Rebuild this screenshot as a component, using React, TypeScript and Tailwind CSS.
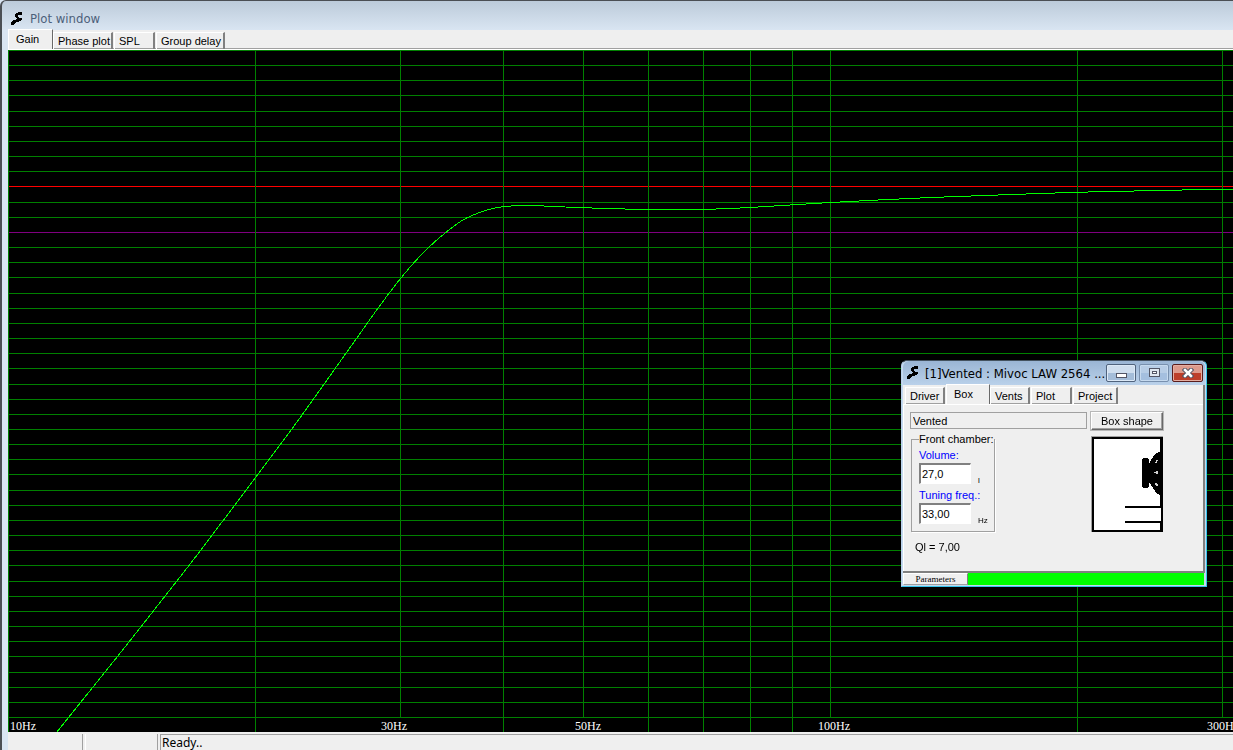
import { useState } from 'react';

interface Point {
  x: number;
  y: number;
}

const DECADE_WIDTH = 822;
const PLOT_HEIGHT = 682;
const LABEL_TOP = 667;
const ROW_COUNT = 44;

const FREQUENCIES = [10, 20, 30, 40, 50, 60, 70, 80, 90, 100, 200, 300, 400];
const LABELLED = [10, 30, 50, 100, 300];

// Left edge of each axis label, relative to its grid line
const LABEL_OFFSETS: Record<number, number> = { 10: 2, 30: -19, 50: -8, 100: -12, 300: -15 };

const PLOT_TABS = ['Gain', 'Phase plot', 'SPL', 'Group delay'];
const PROJECT_TABS = ['Driver', 'Box', 'Vents', 'Plot', 'Project'];

const TAB_WIDTHS: Record<string, string> = {
  Gain: 'w-[45px]',
  'Phase plot': 'w-[60px]',
  SPL: 'w-[41px]',
  'Group delay': 'w-[69px]',
  Driver: 'w-[40px]',
  Box: 'w-[44px]',
  Vents: 'w-[40px]',
  Plot: 'w-[41px]',
  Project: 'w-[45px]',
};

// Sampled transfer function, in plot pixels
const GAIN: Point[] = [
  { x: 48, y: 682 }, { x: 72, y: 652 }, { x: 109, y: 606 }, { x: 157, y: 545 },
  { x: 192, y: 500 }, { x: 247, y: 427 }, { x: 283, y: 379 }, { x: 316, y: 333 },
  { x: 348, y: 288 }, { x: 370, y: 257 }, { x: 392, y: 228 }, { x: 412, y: 205 },
  { x: 430, y: 188 }, { x: 452, y: 171 }, { x: 466, y: 164 }, { x: 480, y: 159 },
  { x: 496, y: 156 }, { x: 522, y: 155 }, { x: 545, y: 156 }, { x: 569, y: 157 },
  { x: 598, y: 158 }, { x: 640, y: 159 }, { x: 690, y: 159 }, { x: 742, y: 157 },
  { x: 822, y: 152 }, { x: 922, y: 147 }, { x: 1003, y: 144 }, { x: 1061, y: 142 },
  { x: 1101, y: 141 }, { x: 1151, y: 140 }, { x: 1204, y: 139 }, { x: 1260, y: 139 },
];

function freqToX(freq: number) {
  return Math.round(Math.log10(freq / 10) * DECADE_WIDTH);
}

// Catmull-Rom through the samples
function smoothPath(pts: Point[]) {
  let d = `M${pts[0].x} ${pts[0].y}`;
  for (let i = 0; i < pts.length - 1; i++) {
    const a = pts[i - 1] ?? pts[i];
    const b = pts[i];
    const c = pts[i + 1];
    const e = pts[i + 2] ?? c;
    d += `C${b.x + (c.x - a.x) / 6} ${b.y + (c.y - a.y) / 6} ${c.x - (e.x - b.x) / 6} ${c.y - (e.y - b.y) / 6} ${c.x} ${c.y}`;
  }
  return d;
}

function AppIcon() {
  return (
    <svg width="14" height="14" viewBox="0 0 14 14" shapeRendering="crispEdges" aria-hidden="true">
      <path d="M8 0h4v3h-4v2h1v1h3v2h-1v1h-2v1h-3v1h-1v1h-1v1h-3v-3h1v-1h1v-1h3v-1h1v-1h-1v-1h-1v-3h1v-1h2z" />
    </svg>
  );
}

function Tab({ label, active, onSelect }: { label: string; active: boolean; onSelect: () => void }) {
  return (
    <button
      type="button"
      role="tab"
      aria-selected={active}
      onClick={onSelect}
      className={`${TAB_WIDTHS[label]} shrink-0 border-l border-t border-white bg-[#efefef] text-left whitespace-nowrap text-black ${
        active
          ? 'relative h-5 border-r border-r-[#696969] pl-[7px]'
          : 'mr-px h-[17px] border-r-2 border-r-[#808080] pl-1 shadow-[inset_0_-1px_0_#a0a0a0]'
      }`}
    >
      {label}
    </button>
  );
}

function GainPlot() {
  return (
    <svg className="block h-full w-full bg-black" role="img" aria-label="Gain">
      <g shapeRendering="crispEdges">
        {Array.from({ length: ROW_COUNT + 1 }, (_, i) => {
          const color = i === 9 ? '#ff0000' : i === 12 ? '#800080' : '#008000';
          const y = Math.round((i * LABEL_TOP) / ROW_COUNT);
          return <rect key={i} x="0" y={y} width="100%" height="1" fill={color} />;
        })}
        {FREQUENCIES.map((f) => (
          <rect
            key={f}
            x={freqToX(f)}
            y="0"
            width="1"
            height={LABELLED.includes(f) && f !== 10 ? LABEL_TOP : PLOT_HEIGHT}
            fill="#008000"
          />
        ))}
        <path d={smoothPath(GAIN)} transform="translate(0.5 0.5)" fill="none" stroke="#00ff00" strokeWidth="1" />
      </g>
      <g fill="#fff" fontSize="12" fontFamily="'Liberation Serif', serif">
        {LABELLED.map((f) => (
          <text key={f} x={freqToX(f) + LABEL_OFFSETS[f]} y="680">
            {f}Hz
          </text>
        ))}
      </g>
    </svg>
  );
}

function BoxDrawing() {
  return (
    <svg width="72" height="96" viewBox="0 0 72 96" shapeRendering="crispEdges" role="img" aria-label="Vented box">
      <path d="M0 0h72v96h-72z" fill="#a0a0a0" />
      <path d="M1 1h71v95h-71z" />
      <path d="M3 3h66v91h-66z" fill="#fff" />
      {/* vent */}
      <path d="M34 70h36v15h-36z" fill="#fff" />
      <path d="M34 70h36v2h-36zM34 85h36v2h-36z" />
      {/* driver */}
      <path d="M51 23h1v-1h5v1h1v4h1v-2h1v-2h1v-1h1v-2h1v-1h1v-1h1v-1h2v-1h3v43h-2v-1h-2v-1h-1v-1h-1v-2h-1v-1h-1v-2h-1v-1h-1v-2h-1v-1h-1v4h-1v1h-5v-1h-1z" />
      <path d="M65 24h2v1h-1v2h-2v-1h1zM63 36h2v-1h2v3h-2v-1h-2zM64 47h2v1h1v2h-2v-1h-1z" fill="#d0d0d0" />
    </svg>
  );
}

function CaptionButtons() {
  return (
    <div className="flex gap-[3px]">
      <button type="button" aria-label="Minimize" className="flex h-[18px] w-[30px] items-center justify-center rounded-[2px] border border-[#50637d] bg-linear-to-b from-[#cfdeee] from-50% to-[#a4bdd9] to-50% shadow-[inset_0_0_0_1px_#dce9f7]">
        <svg width="12" height="14" viewBox="0 0 12 14" shapeRendering="crispEdges">
          <path d="M1 7h11v5h-11z" fill="#535666" />
          <path d="M2 8h9v3h-9z" fill="#fff" />
        </svg>
      </button>
      <button type="button" aria-label="Maximize" className="flex h-[18px] w-[30px] items-center justify-center rounded-[2px] border border-[#7890ae] bg-linear-to-b from-[#b7cde6] from-50% to-[#a4bfdf] to-50% shadow-[inset_0_0_0_1px_#c6daef]">
        <svg width="12" height="10" viewBox="0 0 12 10" shapeRendering="crispEdges">
          <path d="M1 0h11v9h-11z" fill="#535666" />
          <path d="M2 1h9v7h-9z" fill="#dfe7f0" />
          <path d="M4 3h5v3h-5z" fill="#535666" />
          <path d="M5 4h3v1h-3z" fill="#fff" />
        </svg>
      </button>
      <button type="button" aria-label="Close" className="flex h-[18px] w-[31px] items-center justify-center rounded-[2px] border border-[#5a1d1d] bg-linear-to-b from-[#dd9a8c] from-50% to-[#bd3e2a] to-50% shadow-[inset_0_0_0_1px_#e5aea2]">
        <svg width="12" height="10" viewBox="0 0 12 10">
          <path d="M3 2L9 8M9 2L3 8" stroke="#535666" strokeWidth="4.500" strokeLinecap="square" />
          <path d="M3 2L9 8M9 2L3 8" stroke="#fff" strokeWidth="2.500" strokeLinecap="square" />
        </svg>
      </button>
    </div>
  );
}

interface NumberFieldProps {
  id: string;
  label: string;
  unit: string;
  defaultValue: string;
  autoFocus?: boolean;
}

function NumberField({ id, label, unit, defaultValue, autoFocus }: NumberFieldProps) {
  return (
    <div className="h-10">
      <label htmlFor={id} className="block h-[17px] pt-px leading-4 text-[#0000ff]">
        {label}
      </label>
      <div className="flex items-end gap-[7px]">
        <input
          id={id}
          type="text"
          defaultValue={defaultValue}
          autoFocus={autoFocus}
          // caret goes after the last digit
          onFocus={(e) => e.target.setSelectionRange(e.target.value.length, e.target.value.length)}
          className="h-[21px] w-[52px] border border-t-2 border-l-2 border-t-[#808080] border-r-white border-b-white border-l-[#808080] bg-white pl-px text-black outline-none"
        />
        <span className="text-[8px] leading-[6px] text-black">{unit}</span>
      </div>
    </div>
  );
}

function ProjectWindow() {
  const [tab, setTab] = useState('Box');

  return (
    <section className="absolute top-[360px] left-[901px] flex w-[306px] flex-col rounded-t-md border border-t-[#44525f] border-r-[#36c5ee] border-b-[#36c5ee] border-l-[#b9d1ea] bg-[#c5d9ee] px-px pb-px font-['Liberation_Sans',sans-serif] text-[11px]">
      <header className="flex h-6 items-center rounded-t-md bg-linear-to-b from-[#9ab5d4] to-[#bad1ea] pr-0.5 pl-[3px]">
        <AppIcon />
        <h2 className="ml-[5px] flex-1 pt-px font-['DejaVu_Sans_Condensed','Noto_Sans',sans-serif] text-[13px] whitespace-nowrap text-black">
          [1]Vented : Mivoc LAW 2564 ...
        </h2>
        <CaptionButtons />
      </header>
      <div className="border-r-2 border-b-2 border-[#808080] bg-[#efefef]">
        <div role="tablist" className="flex h-5 items-end border-b border-white pl-0.5">
          {PROJECT_TABS.map((t) => (
            <Tab key={t} label={t} active={t === tab} onSelect={() => setTab(t)} />
          ))}
        </div>
        <div className="flex h-[166px] gap-1 border-l border-white pt-[7px] pl-[6px]">
          <div className="w-[177px]">
            <input
              aria-label="Box type"
              readOnly
              defaultValue="Vented"
              className="block h-[17px] w-full border border-[#a0a0a0] pl-0.5 text-black outline-none"
            />
            <fieldset className="mt-[4px] ml-px h-[99px] w-[84px] border border-[#a0a0a0] pl-[7px] shadow-[1px_1px_0_#fff]">
              <legend className="h-[13px] leading-3 whitespace-nowrap text-black">Front chamber:</legend>
              <NumberField id="volume" label="Volume:" unit="l" defaultValue="27,0" />
              <NumberField id="tuning" label="Tuning freq.:" unit="Hz" defaultValue="33,00" autoFocus />
            </fieldset>
            <p className="mt-[7px] ml-[5px] text-black">Ql = 7,00</p>
          </div>
          <div className="w-[72px]">
            <button type="button" className="mb-[6px] block h-[18px] w-full border border-t-white border-r-[#696969] border-b-[#696969] border-l-white leading-4 text-black shadow-[inset_-1px_-1px_0_#a0a0a0,0_0_0_1px_#b8b8b8]">
              Box shape
            </button>
            <BoxDrawing />
          </div>
        </div>
      </div>
      <footer className="mr-px flex h-3 bg-[#00ff00]">
        <button type="button" className="w-[65px] border border-t-white border-r-[#808080] border-b-[#a0a0a0] border-l-white bg-[#efefef] font-['Liberation_Serif',serif] text-[9px] leading-[10px] text-black">
          Parameters
        </button>
      </footer>
    </section>
  );
}

export default function App() {
  const [tab, setTab] = useState('Gain');

  return (
    <main className="relative flex h-screen w-full flex-col overflow-hidden bg-[#d9e5f2] font-['Liberation_Sans',sans-serif] text-[11px]">
      <header className="flex h-[30px] items-center rounded-tl-md border-t border-l-2 border-[#4b4f54] bg-linear-to-b from-[#bccbda] to-[#d9e5f2] pt-[6px] pl-2">
        <AppIcon />
        <h1 className="ml-[6px] font-['DejaVu_Sans_Condensed','Noto_Sans',sans-serif] text-[13px] text-[#4c607a]">Plot window</h1>
      </header>
      <div className="flex min-h-0 flex-1 flex-col border-l-2 border-[#4b4f54] pl-[6px]">
        <div role="tablist" className="flex h-5 items-end border-b border-white bg-[#efefef] shadow-[inset_0_-1px_0_#a0a0a0]">
          {PLOT_TABS.map((t) => (
            <Tab key={t} label={t} active={t === tab} onSelect={() => setTab(t)} />
          ))}
        </div>
        <div className="min-h-0 flex-1">
          <GainPlot />
        </div>
        <footer className="flex h-[18px] gap-0.5 bg-[#efefef] pt-0.5 font-['Noto_Sans',sans-serif] text-xs text-black">
          <div className="w-[75px] border-r border-[#a0a0a0]" />
          <div className="w-[73px] border-r border-l border-r-[#a0a0a0] border-l-white" />
          <div className="flex-1 border-t border-l border-[#a0a0a0] pl-px leading-[15px]">Ready..</div>
        </footer>
      </div>
      <ProjectWindow />
    </main>
  );
}
